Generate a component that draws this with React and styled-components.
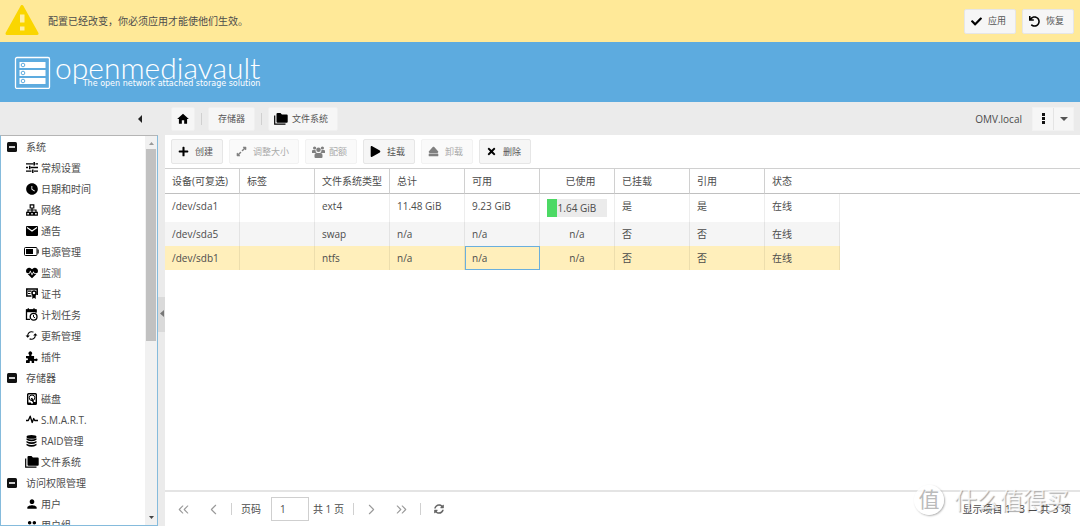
import React from 'react'
import styled, { createGlobalStyle } from 'styled-components'
import {
  FaCheck,
  FaEject,
  FaExpandAlt,
  FaHeartbeat,
  FaPlay,
  FaPlus,
  FaSyncAlt,
  FaTimes,
  FaUndo,
} from 'react-icons/fa'
import { MdCached, MdHome, MdPerson, MdPeople, MdWatchLater } from 'react-icons/md'
import { ChevronLeft, ChevronRight, ChevronsLeft, ChevronsRight } from 'lucide-react'


const GlobalStyle = createGlobalStyle`
  * {
    box-sizing: border-box;
  }

  body {
    margin: 0;
    font-family: "Open Sans", "Noto Sans CJK SC", sans-serif;
    font-size: 10px;
    line-height: 14px;
    color: #4c4c4c;
    background-color: white;
  }

  button,
  input {
    font: inherit;
    color: inherit;
  }

  svg {
    display: block;
    flex-shrink: 0;
  }
`

const Page = styled.div`
  display: flex;
  flex-direction: column;
  height: 100vh;
  background-color: #ebebeb;
`

const Banner = styled.div`
  display: flex;
  align-items: center;
  height: 42px;
  padding: 0 6px 0 5px;
  background-color: #ffe998;
`

const BannerText = styled.p`
  flex: 1;
  margin: 0 0 0 9px;
`

const ButtonGroup = styled.div`
  display: flex;
  gap: 6px;
`

const Button = styled.button`
  display: flex;
  align-items: center;
  gap: ${props => props.$gap || '6px'};
  height: 25px;
  padding: 0 9px 0 6px;
  border: 1px solid #e6e6e6;
  border-radius: 2px;
  background-color: #f6f6f6;
  color: #555;
  font-size: 9px;
  white-space: nowrap;

  svg {
    color: black;
  }

  &:disabled {
    border-color: #f2f2f2;
    background-color: #fafafa;
    color: #aaa;
  }

  &:disabled svg {
    color: #808080;
  }
`

const Masthead = styled.header`
  display: flex;
  align-items: center;
  gap: 4px;
  height: 60px;
  padding: 0 14px;
  background-color: #5dabdf;
  color: white;
`

const Brand = styled.div`
  display: flex;
  flex-direction: column;
`

const BrandName = styled.span`
  font-family: Lato, sans-serif;
  font-size: 30px;
  font-weight: 300;
  line-height: 24px;
`

const Tagline = styled.span`
  font-family: "DejaVu Sans", sans-serif;
  font-size: 8px;
  line-height: 10px;
  text-align: right;
`

const Body = styled.div`
  display: flex;
  flex: 1;
  min-height: 0;
`

const Side = styled.aside`
  display: flex;
  flex-direction: column;
  width: 158px;
`

const SideHeader = styled.div`
  display: flex;
  align-items: center;
  justify-content: flex-end;
  height: 33px;
  padding: 0 14px;
`

const IconButton = styled.button`
  display: flex;
  align-items: center;
  justify-content: center;
  width: ${props => props.$width || 'auto'};
  height: ${props => props.$height || 'auto'};
  padding: 0;
  border: 0;
  background-color: transparent;
  color: ${props => props.$color || '#222'};
`

const TreePanel = styled.nav`
  display: flex;
  flex: 1;
  min-height: 0;
  border: 1px solid #85bbdc;
  border-top-color: #b5b5b5;
  background-color: white;
`

const Tree = styled.ul`
  flex: 1;
  margin: 0;
  padding: 0;
  overflow: hidden;
  list-style: none;
`

const TreeGroup = styled.button`
  display: flex;
  align-items: center;
  gap: 9px;
  width: 100%;
  height: 21px;
  padding: 0 6px;
  border: 0;
  background-color: transparent;
`

const SubTree = styled.ul`
  margin: 0;
  padding: 0;
  list-style: none;
`

const TreeLink = styled.a`
  display: flex;
  align-items: center;
  gap: 2px;
  height: 21px;
  padding-left: 23px;
  color: inherit;
  text-decoration: none;
  white-space: nowrap;

  &:hover {
    background-color: #f0f0f0;
  }
`

const TreeIcon = styled.span`
  display: flex;
  justify-content: center;
  width: 15px;
  color: black;
`

const ScrollBar = styled.div`
  display: flex;
  flex-direction: column;
  align-items: center;
  width: 12px;
  padding: 5px 1px;
  background-color: #f1f1f1;
`

const ScrollTrack = styled.div`
  flex: 1;
  width: 100%;
  margin: 3px 0 4px;
`

const ScrollThumb = styled.div`
  height: 53%;
  background-color: #c1c1c1;
`

const Splitter = styled.div`
  display: flex;
  align-items: center;
  width: 7px;
`

const SplitHandle = styled(IconButton)`
  background-color: #dadada;
`

const Main = styled.main`
  display: flex;
  flex: 1;
  flex-direction: column;
  min-width: 0;
`

const TopBar = styled.div`
  display: flex;
  align-items: center;
  justify-content: space-between;
  height: 33px;
  padding: 0 6px;
`

const Crumbs = styled.div`
  display: flex;
  align-items: center;
  gap: 6px;
`

const Divider = styled.span`
  width: 1px;
  height: 12px;
  background-color: #d0d0d0;
`

const CrumbButton = styled(Button)`
  height: 24px;
  padding: ${props => props.$pad || '0 9px'};
  border-color: #f0f0f0;
`

const Account = styled.div`
  display: flex;
  align-items: center;
  gap: 10px;
`

const SplitButton = styled.div`
  display: flex;
  border: 1px solid #f2f2f2;
  background-color: #f6f6f6;

  button + button {
    border-left: 1px solid #e4e4e4;
  }
`

const Panel = styled.section`
  display: flex;
  flex: 1;
  flex-direction: column;
  min-height: 0;
  background-color: white;
`

const ToolBar = styled.div`
  display: flex;
  align-items: center;
  gap: 6px;
  height: 33px;
  padding: 0 6px;
`

const GridArea = styled.div`
  flex: 1;
  min-height: 0;
  overflow: hidden;
`

const Grid = styled.table`
  width: 100%;
  border-collapse: separate;
  border-spacing: 0;
  table-layout: fixed;
`

const Column = styled.col`
  width: ${props => props.$width || 'auto'};
`

const HeadCell = styled.th`
  height: 26px;
  padding: 0 0 0 7px;
  border-top: 1px solid #d0d0d0;
  border-bottom: 1px solid #c0c0c0;
  border-right: ${props => (props.$plain ? '0' : '1px solid #d0d0d0')};
  font-weight: normal;
  text-align: ${props => props.$align || 'left'};
  white-space: nowrap;
`

const Row = styled.tr`
  height: ${props => (props.$tall ? '28px' : '24px')};
`

const rowColors = { plain: 'white', striped: '#f5f5f5', selected: '#ffefbb' }

const Cell = styled.td`
  padding: 5px 7px 0;
  border-right: 1px solid rgba(0, 0, 0, 0.07);
  background-color: ${props => rowColors[props.$tone]};
  outline: ${props => (props.$focused ? '1px solid #6aafdd' : 'none')};
  outline-offset: -1px;
  text-align: ${props => props.$align || 'left'};
  vertical-align: top;
`

const Meter = styled.div`
  display: flex;
  height: 18px;
  background-color: #ebebeb;
  line-height: 18px;
  white-space: nowrap;
`

const MeterFill = styled.div`
  height: 100%;
  background-color: #4cd964;
`

const MeterText = styled.span`
  padding-left: 1px;
`

const Pager = styled.footer`
  display: flex;
  align-items: center;
  justify-content: space-between;
  height: 36px;
  padding: 0 9px 0 3px;
  border-top: 2px solid #e4e4e4;
`

const PagerControls = styled.div`
  display: flex;
  align-items: center;
`

const PagerDivider = styled(Divider)`
  margin: 0 3px;
`

const PageLabel = styled.label`
  display: flex;
  align-items: center;
  gap: 10px;
  margin-left: 6px;
`

const PageInput = styled.input`
  width: 38px;
  height: 24px;
  padding: 0 8px;
  border: 1px solid #cfcfcf;
  background-color: white;
`

const PageTotal = styled.span`
  margin: 0 6px 0 4px;
`

const Watermark = styled.div`
  position: absolute;
  right: 11px;
  bottom: 9px;
  display: flex;
  align-items: center;
  gap: 10px;
  color: rgba(255, 255, 255, 0.75);
  font-size: 23px;
  line-height: 34px;
  text-shadow: 1px 1px 1px rgba(0, 0, 0, 0.35);
  pointer-events: none;
`

const WatermarkSeal = styled.span`
  width: 30px;
  height: 30px;
  border-radius: 50%;
  background-color: rgba(255, 255, 255, 0.8);
  box-shadow: 1px 1px 2px rgba(0, 0, 0, 0.3);
  color: #bbb;
  font-size: 21px;
  line-height: 29px;
  text-align: center;
  text-shadow: none;
`


const WarningIcon = () => (
  <svg width="34" height="32" viewBox="0 0 34 32">
    <path d="M17 1.500 L32 28.500 H2Z" fill="#fad600" stroke="#fad600" strokeWidth="3" strokeLinejoin="round" />
    <path d="M15 9.500h4.500v8h-4.500z M15 21.500h4.500v4h-4.500z" fill="#ffefa8" />
  </svg>
)

const LogoIcon = () => (
  <svg width="37" height="33" viewBox="0 0 37 33" fill="none" stroke="white">
    <rect x="1.500" y="1.500" width="34" height="31" rx="1.500" strokeWidth="1.300" />
    <path d="M5.500 6h26v6h-26z M5.500 14h26v6h-26z M5.500 22h26v6h-26z" fill="white" stroke="none" />
    <g stroke="#5dabdf">
      <circle cx="9" cy="9" r="1.800" />
      <circle cx="9" cy="17" r="1.800" />
      <circle cx="9" cy="25" r="1.800" />
    </g>
  </svg>
)

const Arrow = ({ points, color, width = 7, height = 8 }) => (
  <svg width={width} height={height} viewBox={`0 0 ${width} ${height}`}>
    <polygon points={points} fill={color} />
  </svg>
)

const MinusBox = () => (
  <svg width="10" height="10" viewBox="0 0 10 10">
    <rect width="10" height="10" rx="1.500" fill="#111" />
    <path d="M2 4.200h6v1.600H2z" fill="white" />
  </svg>
)

const SlidersIcon = () => (
  <svg width="12" height="11" viewBox="0 0 12 11" fill="none" stroke="currentColor" strokeWidth="1.300">
    <path d="M0 1.800h7.500M9.500 1.800H12M0 5.500h2M4.500 5.500H12M0 9.200h5.500M8 9.200h4" />
    <path d="M8.200 0v3.600M3.700 3.700v3.600M6.800 7.400V11" strokeWidth="1.500" />
  </svg>
)

const NetworkIcon = () => (
  <svg width="12" height="12" viewBox="0 0 12 12" fill="none" stroke="currentColor" strokeWidth="1.200">
    <path d="M4.200.8h3.600v3.200H4.200z M.7 8.300h2.800v2.900H.7z M8.500 8.300h2.800v2.900H8.500z M4.700 8.300h2.600v2.900H4.700z M6 4v4 M2 8.200v-2.200h8v2.200" />
  </svg>
)

const MailIcon = () => (
  <svg width="12" height="10" viewBox="0 0 12 10">
    <rect width="12" height="10" rx="1" fill="currentColor" />
    <path d="M1 1.500l5 3.600 5-3.600" fill="none" stroke="white" strokeWidth="1.200" />
  </svg>
)

const BatteryIcon = () => (
  <svg width="15" height="9" viewBox="0 0 15 9">
    <rect x=".5" y=".5" width="12.500" height="8" rx="1" fill="none" stroke="currentColor" />
    <path d="M2 2h7v5H2z M13.500 2.500h1.200v4h-1.200z" fill="currentColor" />
  </svg>
)

const CertificateIcon = () => (
  <svg width="12" height="11" viewBox="0 0 12 11">
    <path d="M5.500 8H.8V1h10.400v6" fill="none" stroke="currentColor" strokeWidth="1.500" />
    <path d="M2 3.200h3.500M2 5.500h2.500" stroke="currentColor" strokeWidth="1.200" />
    <circle cx="8" cy="5" r="2" fill="white" stroke="currentColor" strokeWidth="1.500" />
    <path d="M6.300 7h3.400v4L8 9.800 6.300 11z" fill="currentColor" />
  </svg>
)

const ScheduleIcon = () => (
  <svg width="13" height="13" viewBox="0 0 13 13" fill="none" stroke="currentColor">
    <path d="M5 11.300H1.500V1.800h9.500v3" strokeWidth="1.300" />
    <path d="M1 1.500h10.500v2.700H1z" fill="currentColor" stroke="none" />
    <path d="M3.300.2v2M9 .2v2" strokeWidth="1.300" />
    <circle cx="8.600" cy="8.700" r="3.400" strokeWidth="1.300" />
    <path d="M8.500 6.800v2.100l1.500.9" />
  </svg>
)

const PluginIcon = () => (
  <svg width="12" height="12" viewBox="0 0 12 12" fill="currentColor">
    <path d="M1 5h2.200V3.700A1.800 1.800 0 1 1 5.400 3.700V5h2.700v2.900h1.200a1.300 1.300 0 1 1 0 1.800H8.100V12H5.700v-1.200a1 1 0 0 0-2 0V12H0V9.300h1a1 1 0 0 0 0-2H0V5z" />
  </svg>
)

const DiskIcon = () => (
  <svg width="10" height="12" viewBox="0 0 10 12" fill="none" stroke="currentColor">
    <rect x=".7" y=".7" width="8.600" height="10.600" rx=".8" strokeWidth="1.400" />
    <circle cx="5" cy="4.800" r="2.800" />
    <path d="M4.500 5l1.800 4" strokeWidth="1.600" />
    <path d="M1 9.500h3v1.500H1z M6 9h3v2H6z" fill="currentColor" stroke="none" />
  </svg>
)

const PulseIcon = () => (
  <svg width="12" height="9" viewBox="0 0 12 9" fill="none" stroke="currentColor" strokeWidth="1.300">
    <path d="M0 5.500h2.300L4.200 1.200l2 6.300 1.500-4 1 2H12" strokeLinejoin="round" />
  </svg>
)

const RaidIcon = () => (
  <svg width="11" height="12" viewBox="0 0 11 12" fill="currentColor">
    <ellipse cx="5.500" cy="1.900" rx="5" ry="1.900" />
    <path d="M.5 3.300q5 2.600 10 0v1.500q-5 3-10 0z M.5 6q5 2.600 10 0v1.500q-5 3-10 0z M.5 8.700q5 2.600 10 0v1.500q-5 3-10 0z" />
  </svg>
)

const FoldersIcon = () => (
  <svg width="14" height="12" viewBox="0 0 14 12">
    <path d="M2.500 1q0-1 1-1h3l1.400 1.500h4.800q1 0 1 1v6.200q0 1-1 1H3.500q-1 0-1-1z" fill="currentColor" />
    <path d="M.7 2.500v8.700h10.800" fill="none" stroke="currentColor" strokeWidth="1.200" />
  </svg>
)

const QuotaIcon = () => (
  <svg width="13" height="12" viewBox="0 0 13 12" fill="currentColor">
    <circle cx="2.600" cy="2" r="1.600" />
    <circle cx="10.400" cy="2" r="1.600" />
    <circle cx="6.500" cy="3.800" r="2.300" />
    <path d="M0 7V5q0-1 1-1h2.500q0 2 1.200 3z M13 7V5q0-1-1-1H9.500q0 2-1.200 3z" />
    <path d="M2.500 11V9q0-2 2-2h4q2 0 2 2v2q0 1-1 1h-6q-1 0-1-1z" />
  </svg>
)

const DotsIcon = () => (
  <svg width="3" height="11" viewBox="0 0 3 11" fill="#111">
    <path d="M0 0h3v3H0z M0 4h3v3H0z M0 8h3v3H0z" />
  </svg>
)


const groups = [
  {
    title: '系统',
    items: [
      { label: '常规设置', icon: <SlidersIcon /> },
      { label: '日期和时间', icon: <MdWatchLater size={14} /> },
      { label: '网络', icon: <NetworkIcon /> },
      { label: '通告', icon: <MailIcon /> },
      { label: '电源管理', icon: <BatteryIcon /> },
      { label: '监测', icon: <FaHeartbeat size={12} /> },
      { label: '证书', icon: <CertificateIcon /> },
      { label: '计划任务', icon: <ScheduleIcon /> },
      { label: '更新管理', icon: <MdCached size={13} /> },
      { label: '插件', icon: <PluginIcon /> },
    ],
  },
  {
    title: '存储器',
    items: [
      { label: '磁盘', icon: <DiskIcon /> },
      { label: 'S.M.A.R.T.', icon: <PulseIcon /> },
      { label: 'RAID管理', icon: <RaidIcon /> },
      { label: '文件系统', icon: <FoldersIcon /> },
    ],
  },
  {
    title: '访问权限管理',
    items: [
      { label: '用户', icon: <MdPerson size={14} /> },
      { label: '用户组', icon: <MdPeople size={14} /> },
    ],
  },
]

const columns = ['设备(可复选)', '标签', '文件系统类型', '总计', '可用', '已使用', '已挂载', '引用', '状态']

const rows = [
  { tone: 'plain', cells: ['/dev/sda1', '', 'ext4', '11.48 GiB', '9.23 GiB', '1.64 GiB', '是', '是', '在线'], used: 16 },
  { tone: 'striped', cells: ['/dev/sda5', '', 'swap', 'n/a', 'n/a', 'n/a', '否', '否', '在线'] },
  { tone: 'selected', cells: ['/dev/sdb1', '', 'ntfs', 'n/a', 'n/a', 'n/a', '否', '否', '在线'], focus: 4 },
]

const USED = 5

const align = index => (index === USED ? 'center' : 'left')

const Sidebar = () => (
  <Side>
    <SideHeader>
      <IconButton aria-label="收起">
        <Arrow points="1,4 5,0 5,8" color="#222" />
      </IconButton>
    </SideHeader>
    <TreePanel>
      <Tree>
        {groups.map(group => (
          <li key={group.title}>
            <TreeGroup>
              <MinusBox />
              {group.title}
            </TreeGroup>
            <SubTree>
              {group.items.map(item => (
                <li key={item.label}>
                  <TreeLink href="#">
                    <TreeIcon>{item.icon}</TreeIcon>
                    {item.label}
                  </TreeLink>
                </li>
              ))}
            </SubTree>
          </li>
        ))}
      </Tree>
      <ScrollBar>
        <Arrow points="1,4 6,4 3.5,1" color="#999" height={5} />
        <ScrollTrack>
          <ScrollThumb />
        </ScrollTrack>
        <Arrow points="1,1 6,1 3.5,4" color="#444" height={5} />
      </ScrollBar>
    </TreePanel>
  </Side>
)

const FileSystems = () => (
  <Grid>
    <colgroup>
      {columns.map(name => <Column key={name} $width="75px" />)}
      <Column />
    </colgroup>
    <thead>
      <tr>
        {columns.map((name, index) => (
          <HeadCell key={name} $align={align(index)} $plain={index === columns.length - 1}>
            {name}
          </HeadCell>
        ))}
        <HeadCell as="td" $plain />
      </tr>
    </thead>
    <tbody>
      {rows.map(row => (
        <Row key={row.cells[0]} $tall={row.used !== undefined}>
          {row.cells.map((text, index) => (
            <Cell key={index} $tone={row.tone} $align={align(index)} $focused={row.focus === index}>
              {index === USED && row.used ? (
                <Meter>
                  <MeterFill style={{ width: `${row.used}%` }} />
                  <MeterText>{text}</MeterText>
                </Meter>
              ) : text}
            </Cell>
          ))}
          <td />
        </Row>
      ))}
    </tbody>
  </Grid>
)

const App = () => (
  <Page>
    <GlobalStyle />
    <Banner>
      <WarningIcon />
      <BannerText>配置已经改变，你必须应用才能使他们生效。</BannerText>
      <ButtonGroup>
        <Button><FaCheck size={11} />应用</Button>
        <Button><FaUndo size={11} />恢复</Button>
      </ButtonGroup>
    </Banner>

    <Masthead>
      <LogoIcon />
      <Brand>
        <BrandName>openmediavault</BrandName>
        <Tagline>The open network attached storage solution</Tagline>
      </Brand>
    </Masthead>

    <Body>
      <Sidebar />
      <Splitter>
        <SplitHandle $width="7px" $height="35px" aria-label="折叠">
          <Arrow points="1,3.5 5,0 5,7" color="#777" width={6} />
        </SplitHandle>
      </Splitter>
      <Main>
        <TopBar>
          <Crumbs>
            <CrumbButton $pad="0 4px" aria-label="首页"><MdHome size={14} /></CrumbButton>
            <Divider />
            <CrumbButton>存储器</CrumbButton>
            <Divider />
            <CrumbButton $pad="0 9px 0 5px" $gap="4px"><FoldersIcon />文件系统</CrumbButton>
          </Crumbs>
          <Account>
            <span>OMV.local</span>
            <SplitButton>
              <IconButton $width="20px" $height="22px" aria-label="菜单"><DotsIcon /></IconButton>
              <IconButton $width="20px" $height="22px" aria-label="更多">
                <Arrow points="0,0 8,0 4,4" color="#555" width={8} height={4} />
              </IconButton>
            </SplitButton>
          </Account>
        </TopBar>
        <Panel>
          <ToolBar>
            <Button><FaPlus size={11} />创建</Button>
            <Button disabled><FaExpandAlt size={11} />调整大小</Button>
            <Button disabled $gap="4px"><QuotaIcon />配额</Button>
            <Button><FaPlay size={11} />挂载</Button>
            <Button disabled><FaEject size={11} />卸载</Button>
            <Button><FaTimes size={11} />删除</Button>
          </ToolBar>
          <GridArea>
            <FileSystems />
          </GridArea>
          <Pager>
            <PagerControls>
              <IconButton $width="30px" $color="#999" aria-label="第一页"><ChevronsLeft size={17} strokeWidth={1.5} /></IconButton>
              <IconButton $width="30px" $color="#999" aria-label="上一页"><ChevronLeft size={17} strokeWidth={1.5} /></IconButton>
              <PagerDivider />
              <PageLabel>
                页码
                <PageInput defaultValue="1" />
              </PageLabel>
              <PageTotal>共 1 页</PageTotal>
              <PagerDivider />
              <IconButton $width="30px" $color="#999" aria-label="下一页"><ChevronRight size={17} strokeWidth={1.5} /></IconButton>
              <IconButton $width="30px" $color="#999" aria-label="最后一页"><ChevronsRight size={17} strokeWidth={1.5} /></IconButton>
              <PagerDivider />
              <IconButton $width="30px" $color="#666" aria-label="刷新"><FaSyncAlt size={10} /></IconButton>
            </PagerControls>
            <span>显示项目 1 - 3 — 共 3 项</span>
          </Pager>
        </Panel>
      </Main>
    </Body>
    <Watermark>
      <WatermarkSeal>值</WatermarkSeal>
      什么值得买
    </Watermark>
  </Page>
)

export default App
